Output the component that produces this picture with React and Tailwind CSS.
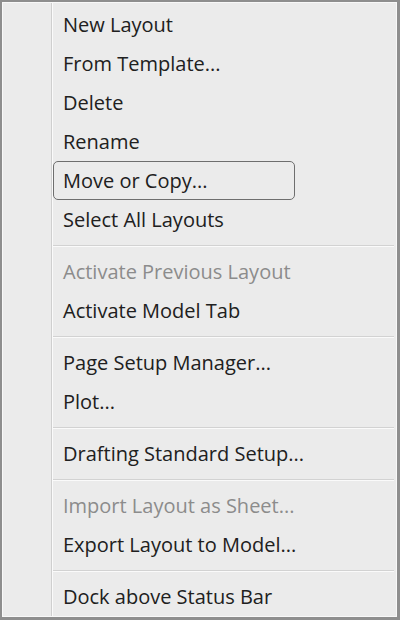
import React from "react";

// Layout tab context menu
const groups = [
  [
    { label: "New Layout" },
    { label: "From Template..." },
    { label: "Delete" },
    { label: "Rename" },
    { label: "Move or Copy...", active: true },
    { label: "Select All Layouts" },
  ],
  [
    { label: "Activate Previous Layout", disabled: true },
    { label: "Activate Model Tab" },
  ],
  [{ label: "Page Setup Manager..." }, { label: "Plot..." }],
  [{ label: "Drafting Standard Setup..." }],
  [
    { label: "Import Layout as Sheet...", disabled: true },
    { label: "Export Layout to Model..." },
  ],
  [{ label: "Dock above Status Bar" }],
];

function MenuItem({ label, active, disabled }) {
  return (
    <div className="flex h-[39px] items-center">
      <div
        className={`flex h-[39px] w-[242px] items-center whitespace-nowrap rounded-[5px] border-[1.5px] pl-[9px] ${
          active ? "border-[#6e6e6e]" : "border-transparent"
        } ${disabled ? "text-[#8c8c8c]" : "text-[#202020]"}`}
      >
        {label}
      </div>
    </div>
  );
}

function Separator() {
  return (
    <div className="h-[13px] pt-[6px]">
      <div className="h-px bg-[#d2d2d2]" />
      <div className="h-px bg-[#fafafa]" />
    </div>
  );
}

export default function App() {
  return (
    <div
      className="h-[620px] w-[400px] border-t-2 border-b-[3px] border-l-2 border-r-[3px] border-[#8e8e8e] bg-[#ebebeb]"
      style={{ fontFamily: '"Open Sans", "Noto Sans", sans-serif' }}
    >
      <div className="flex h-full border border-[#f8f8f8]">
        {/* icon gutter */}
        <div className="w-[48px] shrink-0" />
        <div className="w-px bg-[#cfcfcf]" />
        <div className="w-px bg-[#fafafa]" />
        <div className="flex-1 pr-[2px] pt-[2px] text-[20px] font-medium">
          {groups.map((items, gi) => (
            <div key={gi}>
              {gi > 0 && <Separator />}
              {items.map((it) => (
                <MenuItem key={it.label} {...it} />
              ))}
            </div>
          ))}
        </div>
      </div>
    </div>
  );
}
